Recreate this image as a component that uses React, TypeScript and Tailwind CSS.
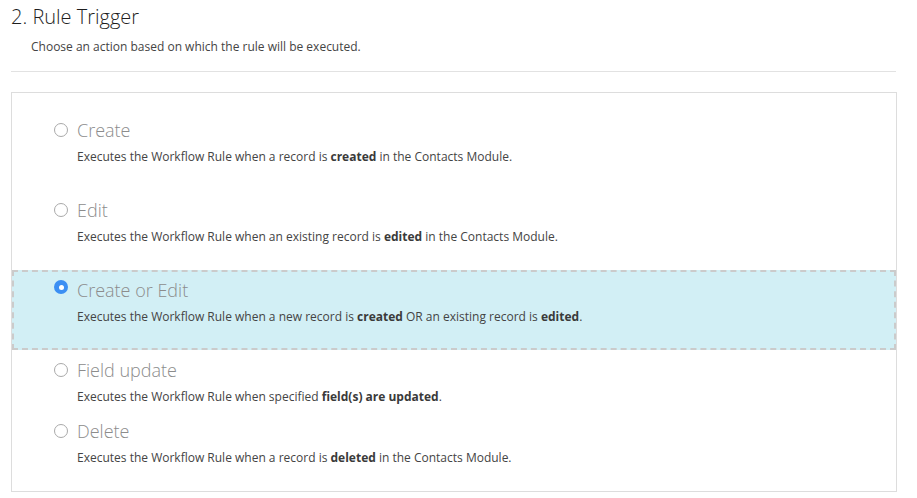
import React from "react";

type Opt = { label: string; desc: React.ReactNode; selected?: boolean; tight?: boolean };

const B = ({ children }: { children: React.ReactNode }) => (
  <span className="font-bold text-[#3a3a3a]">{children}</span>
);

const options: Opt[] = [
  { label: "Create", desc: <>Executes the Workflow Rule when a record is <B>created</B> in the Contacts Module.</> },
  { label: "Edit", desc: <>Executes the Workflow Rule when an existing record is <B>edited</B> in the Contacts Module.</> },
  {
    label: "Create or Edit",
    selected: true,
    desc: <>Executes the Workflow Rule when a new record is <B>created</B> OR an existing record is <B>edited</B>.</>,
  },
  { label: "Field update", tight: true, desc: <>Executes the Workflow Rule when specified <B>field(s) are updated</B>.</> },
  { label: "Delete", desc: <>Executes the Workflow Rule when a record is <B>deleted</B> in the Contacts Module.</> },
];

function Radio({ on }: { on?: boolean }) {
  if (on)
    return (
      <span className="flex h-[14px] w-[14px] items-center justify-center rounded-full bg-[#3b8ff3]">
        <span className="h-[5px] w-[5px] rounded-full bg-white" />
      </span>
    );
  return <span className="block h-[14px] w-[14px] rounded-full border border-[#a9a9a9] bg-white" />;
}

export default function App() {
  return (
    <div className="min-h-[498px] w-[917px] bg-white font-['Open_Sans',sans-serif]">
      <div className="pl-[11px] pr-[20px] pt-[3px]">
        <h1 className="text-[20px] font-light leading-[28px] text-[#1e1e1e]">2. Rule Trigger</h1>
        <p className="mt-[7px] pl-[20px] text-[12px] leading-[18px] text-[#444]">
          Choose an action based on which the rule will be executed.
        </p>
        <div className="mt-[15px] h-px w-[885px] bg-[#e2e2e2]" />
        <div className="mt-[20px] w-[886px] border border-[#dddddd] pt-[17px]">
          {options.map((o) => (
            <div
              key={o.label}
              className={
                "border-2 pl-[40px] pt-[7px] " +
                (o.tight ? "pb-[3px] " : "pb-[22px] ") +
                (o.selected ? "border-dashed border-[#cbcbcb] bg-[#d2eff5]" : "border-transparent")
              }
            >
              <div className="flex items-center">
                <div className={o.selected ? "-mt-[6px]" : ""}>
                  <Radio on={o.selected} />
                </div>
                <span className="ml-[9px] text-[18px] font-light leading-[22px] text-[#8c8c8c]">{o.label}</span>
              </div>
              <div className="mt-[7px] pl-[23px] text-[12px] leading-[18px] text-[#444]">{o.desc}</div>
            </div>
          ))}
        </div>
      </div>
    </div>
  );
}
